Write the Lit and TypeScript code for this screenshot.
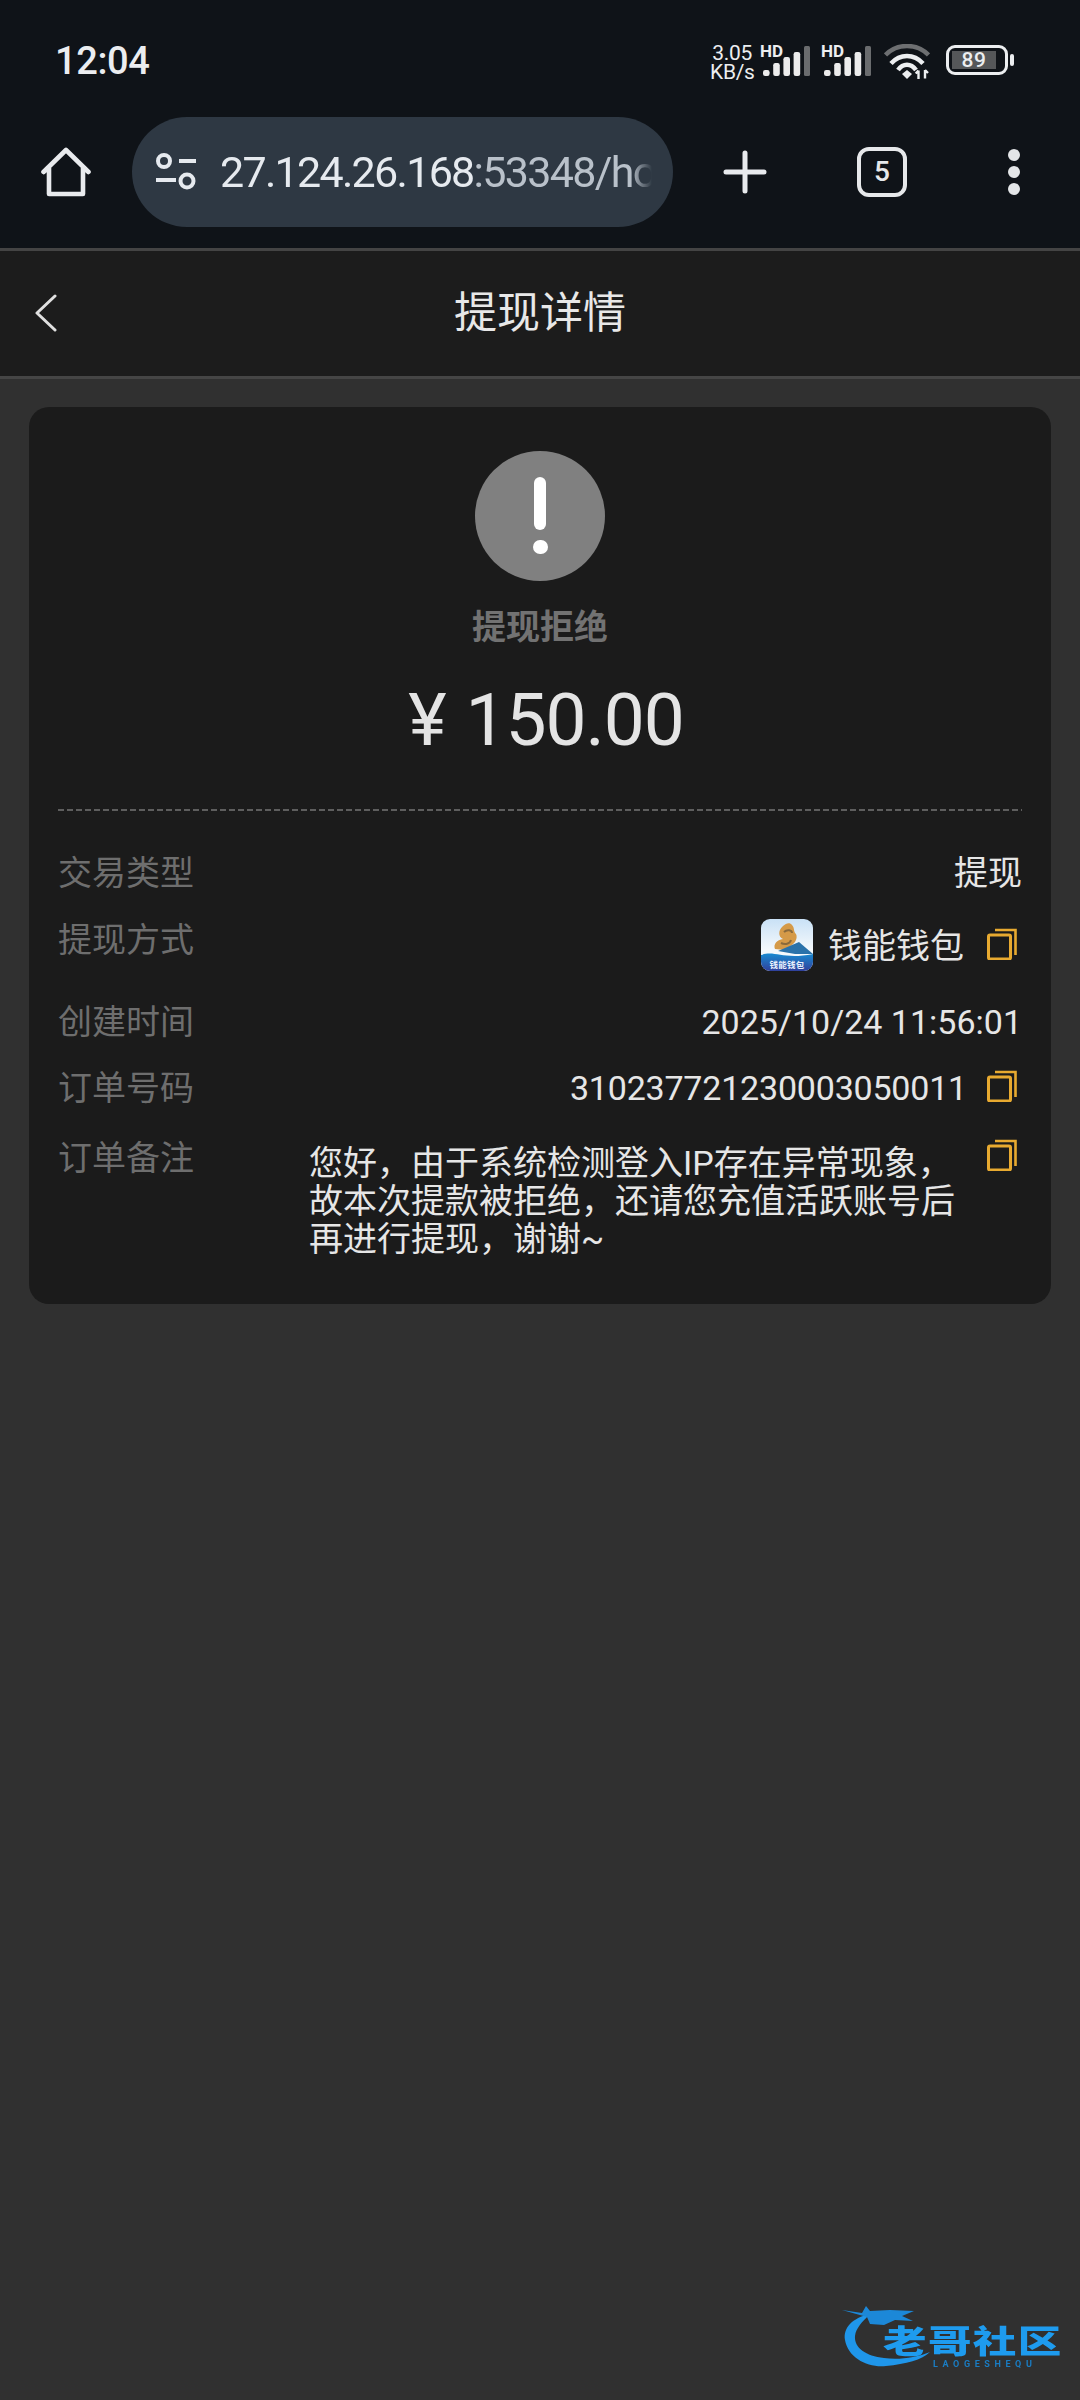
import { LitElement, html, css, svg } from "lit";
import { customElement } from "lit/decorators.js";

const copyIcon = html`<svg class="copy" viewBox="0 0 30 32" width="30" height="32" fill="none" stroke="#e8aa30">
  <rect x="1.5" y="7" width="22" height="24" rx="1.5" stroke-width="3"></rect>
  <path d="M8 2h20.5v25" stroke-width="2.6"></path>
</svg>`;

const bars = [6, 13, 19, 24];
const signal = html`<svg class="bars" width="47" height="31" viewBox="0 0 47 31">
  ${bars.map((h, i) => svg`<rect x="${i * 10.2}" y="${31 - h}" width="6.6" height="${h}" rx="2.2" fill="#ececec"></rect>`)}
  <rect x="41" y="1" width="6" height="30" rx="1.5" fill="#6a6c6e"></rect>
</svg>`;

@customElement("app-root")
export class AppRoot extends LitElement {
  static styles = css`
    :host {
      display: block;
      position: relative;
      width: 1080px;
      height: 2400px;
      overflow: hidden;
      background: #303030;
      color: #e6e6e6;
      font-family: Roboto, "Noto Sans CJK SC", sans-serif;
    }
    .chrome { background: #0f1318; height: 248px; display: flex; flex-direction: column; }
    .status { height: 117px; display: flex; align-items: flex-start; padding: 0 66px 0 55px; }
    .time { font-size: 38px; font-weight: 500; line-height: 44px; margin-top: 39px; color: #ebedf0; letter-spacing: -0.4px; }
    .sysicons { margin-left: auto; display: flex; align-items: flex-start; margin-top: 44px; color: #eceef0; }
    .speed { font-size: 21px; line-height: 18.5px; text-align: right; width: 42px; margin-right: 8px; letter-spacing: -0.3px; }
    .sig { position: relative; width: 61px; height: 34px; }
    .hd { position: absolute; left: 0; top: 0; font-size: 17px; line-height: 15px; font-weight: 700; }
    .bars { position: absolute; left: 3px; top: 1px; }
    .wifi { margin-left: 2px; margin-right: 16px; }
    .battery { width: 62px; height: 30px; box-sizing: border-box; border: 3px solid #eceef0; border-radius: 9px; padding: 3px; margin-top: 1px; }
    .level { display: block; height: 100%; width: 44px; background: #555759; font-size: 21px; line-height: 19px; text-align: center; font-weight: 500; letter-spacing: 0.6px; color: #eceef0; }
    .nub { width: 4px; height: 12px; background: #eceef0; border-radius: 2px; margin: 10px 0 0 2px; }
    .toolbar { height: 110px; display: flex; align-items: center; padding-left: 41px; }
    .home { width: 50px; height: 50px; margin-right: 41px; }
    .pill { width: 541px; height: 110px; border-radius: 55px; background: #2e3843; display: flex; align-items: center; box-sizing: border-box; padding: 0 21px 0 23px; margin-right: 50px; }
    .tune { width: 42px; height: 38px; flex: none; margin-right: 23px; }
    .url { font-size: 43px; line-height: 60px; white-space: nowrap; overflow: hidden; flex: 1; color: #b9c1ca; letter-spacing: -1.7px; -webkit-mask-image: linear-gradient(to right, #000 95%, transparent); mask-image: linear-gradient(to right, #000 95%, transparent); }
    .url b { font-weight: 400; color: #e6eaef; }
    .plus { width: 44px; height: 44px; margin-right: 90px; }
    .tabs { width: 50px; height: 50px; box-sizing: border-box; border: 4px solid #e6e8ea; border-radius: 12px; font-size: 28px; font-weight: 500; line-height: 42px; text-align: center; color: #e6e8ea; margin-right: 101px; }
    .dots { display: flex; flex-direction: column; gap: 5px; }
    .dots i { width: 12px; height: 12px; border-radius: 50%; background: #e4e6e8; }
    .sep { height: 3px; background: #444; }
    .nav { height: 125px; background: #1c1c1c; border-bottom: 3px solid #454545; display: flex; align-items: center; justify-content: center; position: relative; }
    .back { position: absolute; left: 33px; top: 43px; }
    .title { font-size: 43px; line-height: 60px; color: #e8e8e8; font-weight: 400; margin-bottom: 2px; }
    .card { margin: 28px 29px 0; height: 897px; box-sizing: border-box; background: #1b1b1b; border-radius: 20px; padding: 44px 29px 0; display: flex; flex-direction: column; }
    .icon { align-self: center; width: 130px; height: 130px; border-radius: 50%; background: #808080; display: flex; flex-direction: column; align-items: center; padding-top: 26px; box-sizing: border-box; }
    .bar { width: 12px; height: 53px; border-radius: 6px; background: #fff; }
    .dot { width: 15px; height: 14px; border-radius: 7px; background: #fff; margin-top: 10px; }
    .state { margin-top: 26px; text-align: center; font-size: 34px; line-height: 40px; font-weight: 700; color: #727272; }
    .amount { margin-top: 25px; padding-left: 12px; text-align: center; font-size: 73px; line-height: 96px; color: #e4e4e4; font-weight: 400; display: flex; justify-content: center; align-items: center; gap: 20px; letter-spacing: -1px; }
    .divider { margin-top: 41px; height: 2px; background: repeating-linear-gradient(to right, #5e5e5e 0 6px, transparent 6px 9px); }
    .row { display: flex; justify-content: space-between; align-items: flex-start; font-size: 34px; line-height: 44px; }
    .label { color: #6e6e6e; flex: none; }
    .value { color: #e6e6e6; display: flex; align-items: center; }
    .r1 { margin-top: 40px; }
    .r2 { margin-top: 23px; }
    .r3 { margin-top: 27px; }
    .r4 { margin-top: 22px; }
    .r5 { margin-top: 26px; }
    .logoimg { width: 52px; height: 52px; border-radius: 9px; margin-right: 15px; display: block; margin-bottom: 2px; }
    .method { margin-top: 1px; }
    .copy { margin-left: 20px; flex: none; margin-right: 5px; margin-bottom: 5px; }
    .method .copy { margin-left: 23px; }
    .order { letter-spacing: -0.2px; }
    .note { width: 713px; position: relative; }
    .note p { margin: 8px 0 0; width: 660px; font-size: 34px; line-height: 38px; color: #e6e6e6; }
    .note .copy { position: absolute; right: 0; top: 3px; margin: 0 5px 0 0; }
    .mark { position: absolute; left: 840px; top: 2300px; width: 230px; height: 78px; filter: blur(0.6px); }
    .mark svg { position: absolute; left: 0; top: 0; }
    .mark .cn { position: absolute; left: 43px; top: 22px; font-size: 32px; line-height: 40px; font-weight: 900; letter-spacing: 1px; white-space: nowrap; color: #1e9bee; transform: scaleX(1.36); transform-origin: left center; }
    .mark .en { position: absolute; left: 93px; top: 59px; font-size: 9px; line-height: 11px; letter-spacing: 4.6px; color: #1a7cc2; white-space: nowrap; font-weight: 700; }
    .logotext { font-size: 8.5px; font-weight: 700; fill: #e8effc; letter-spacing: 0.2px; }
  `;

  render() {
    return html`
      <div class="chrome">
        <div class="status">
          <div class="time">12:04</div>
          <div class="sysicons">
            <div class="speed">3.05<br />KB/s</div>
            <div class="sig"><span class="hd">HD</span>${signal}</div>
            <div class="sig"><span class="hd">HD</span>${signal}</div>
            <svg class="wifi" width="46" height="36" viewBox="0 0 46 36" fill="none">
              <path d="M1.5 11C13 -1 33 -1 44.5 11" stroke="#6d6f71" stroke-width="4.5"></path>
              <path d="M7 19.5C16 9.5 30 9.5 39 19.5" stroke="#eceef0" stroke-width="4.5"></path>
              <path d="M14 26C19 19 27 19 32 26" stroke="#eceef0" stroke-width="4.5"></path>
              <path d="M18 30l5-4 5 4-5 5z" fill="#eceef0"></path>
              <path d="M34.5 35v-8.5M34.5 26.5l-2.8 3M41 26v8.5M41 26l3 3" stroke="#eceef0" stroke-width="2.4"></path>
            </svg>
            <div class="battery"><span class="level">89</span></div>
            <div class="nub"></div>
          </div>
        </div>
        <div class="toolbar">
          <svg class="home" viewBox="0 0 50 50" fill="none" stroke="#e8eaed" stroke-width="4.6" stroke-linejoin="round" stroke-linecap="round">
            <path d="M2.5 25L25 3l22.5 22M8 21v26h34V21"></path>
          </svg>
          <div class="pill">
            <svg class="tune" viewBox="0 0 42 38" fill="none" stroke="#e6eaef" stroke-width="4">
              <circle cx="9" cy="8" r="6"></circle>
              <path d="M24 8h17M1 27h20"></path>
              <circle cx="32" cy="28" r="6.5"></circle>
            </svg>
            <div class="url"><b>27.124.26.168</b>:53348/home</div>
          </div>
          <svg class="plus" viewBox="0 0 44 44" stroke="#e8eaed" stroke-width="5" stroke-linecap="round">
            <path d="M22 3v38M3 22h38"></path>
          </svg>
          <div class="tabs">5</div>
          <div class="dots"><i></i><i></i><i></i></div>
        </div>
      </div>
      <div class="sep"></div>
      <div class="nav">
        <svg class="back" width="26" height="38" viewBox="0 0 26 38" fill="none" stroke="#e0e0e0" stroke-width="3" stroke-linecap="round" stroke-linejoin="round">
          <path d="M22 2L4 19l18 17"></path>
        </svg>
        <div class="title">提现详情</div>
      </div>
      <div class="card">
        <div class="icon"><div class="bar"></div><div class="dot"></div></div>
        <div class="state">提现拒绝</div>
        <div class="amount"><span>¥</span><span>150.00</span></div>
        <div class="divider"></div>
        <div class="row r1"><span class="label">交易类型</span><span class="value">提现</span></div>
        <div class="row r2">
          <span class="label">提现方式</span>
          <span class="value method">
            <svg class="logoimg" viewBox="0 0 52 52">
              <defs>
                <linearGradient id="sky" x1="0" y1="0" x2="0" y2="1"><stop offset="0" stop-color="#c9e1f6"></stop><stop offset="0.6" stop-color="#f5f9fc"></stop></linearGradient>
                <linearGradient id="sea" x1="0" y1="0" x2="0" y2="1"><stop offset="0" stop-color="#1a8ad0"></stop><stop offset="1" stop-color="#30409c"></stop></linearGradient>
              </defs>
              <rect width="52" height="52" fill="url(#sky)"></rect>
              <path d="M14 30c-2-5 2-9 8-10-5-2-5-9 0-13 3-3 7-4 9-1 3 3 1 6 4 9 2 4-1 9-4 11l-8 5z" fill="#d59a48"></path>
              <path d="M23 13c3-3 8-2 8 1M20 24c4 2 9 1 10-3" fill="none" stroke="#8a6a3c" stroke-width="2"></path>
              <path d="M17 32L38 23l14 12-18 0z" fill="#2a72aa"></path>
              <path d="M0 36c14-5 22 5 52-1v17H0z" fill="url(#sea)"></path>
              <text class="logotext" x="26" y="49" text-anchor="middle">钱能钱包</text>
            </svg>
            钱能钱包${copyIcon}
          </span>
        </div>
        <div class="row r3"><span class="label">创建时间</span><span class="value">2025/10/24 11:56:01</span></div>
        <div class="row r4"><span class="label">订单号码</span><span class="value order">310237721230003050011${copyIcon}</span></div>
        <div class="row r5">
          <span class="label">订单备注</span>
          <span class="note">
            <p>您好，由于系统检测登入IP存在异常现象，故本次提款被拒绝，还请您充值活跃账号后再进行提现，谢谢~</p>
            ${copyIcon}
          </span>
        </div>
      </div>
      <div class="mark">
        <svg width="100" height="76" viewBox="0 0 100 76">
          <path d="M30 14C12 18 3 28 5 40C8 58 28 68 46 66C66 64 82 60 90 52C76 58 58 60 44 58C26 56 14 48 15 36C16 28 22 22 30 14z" fill="#1f96ea"></path>
          <path d="M2 10L22 13L26 6L30 11L50 10L74 11L62 16L73 21L55 20L44 25L30 24L27 17z" fill="#1c88d8"></path>
        </svg>
        <div class="cn">老哥社区</div>
        <div class="en">LAOGESHEQU</div>
      </div>
    `;
  }
}
